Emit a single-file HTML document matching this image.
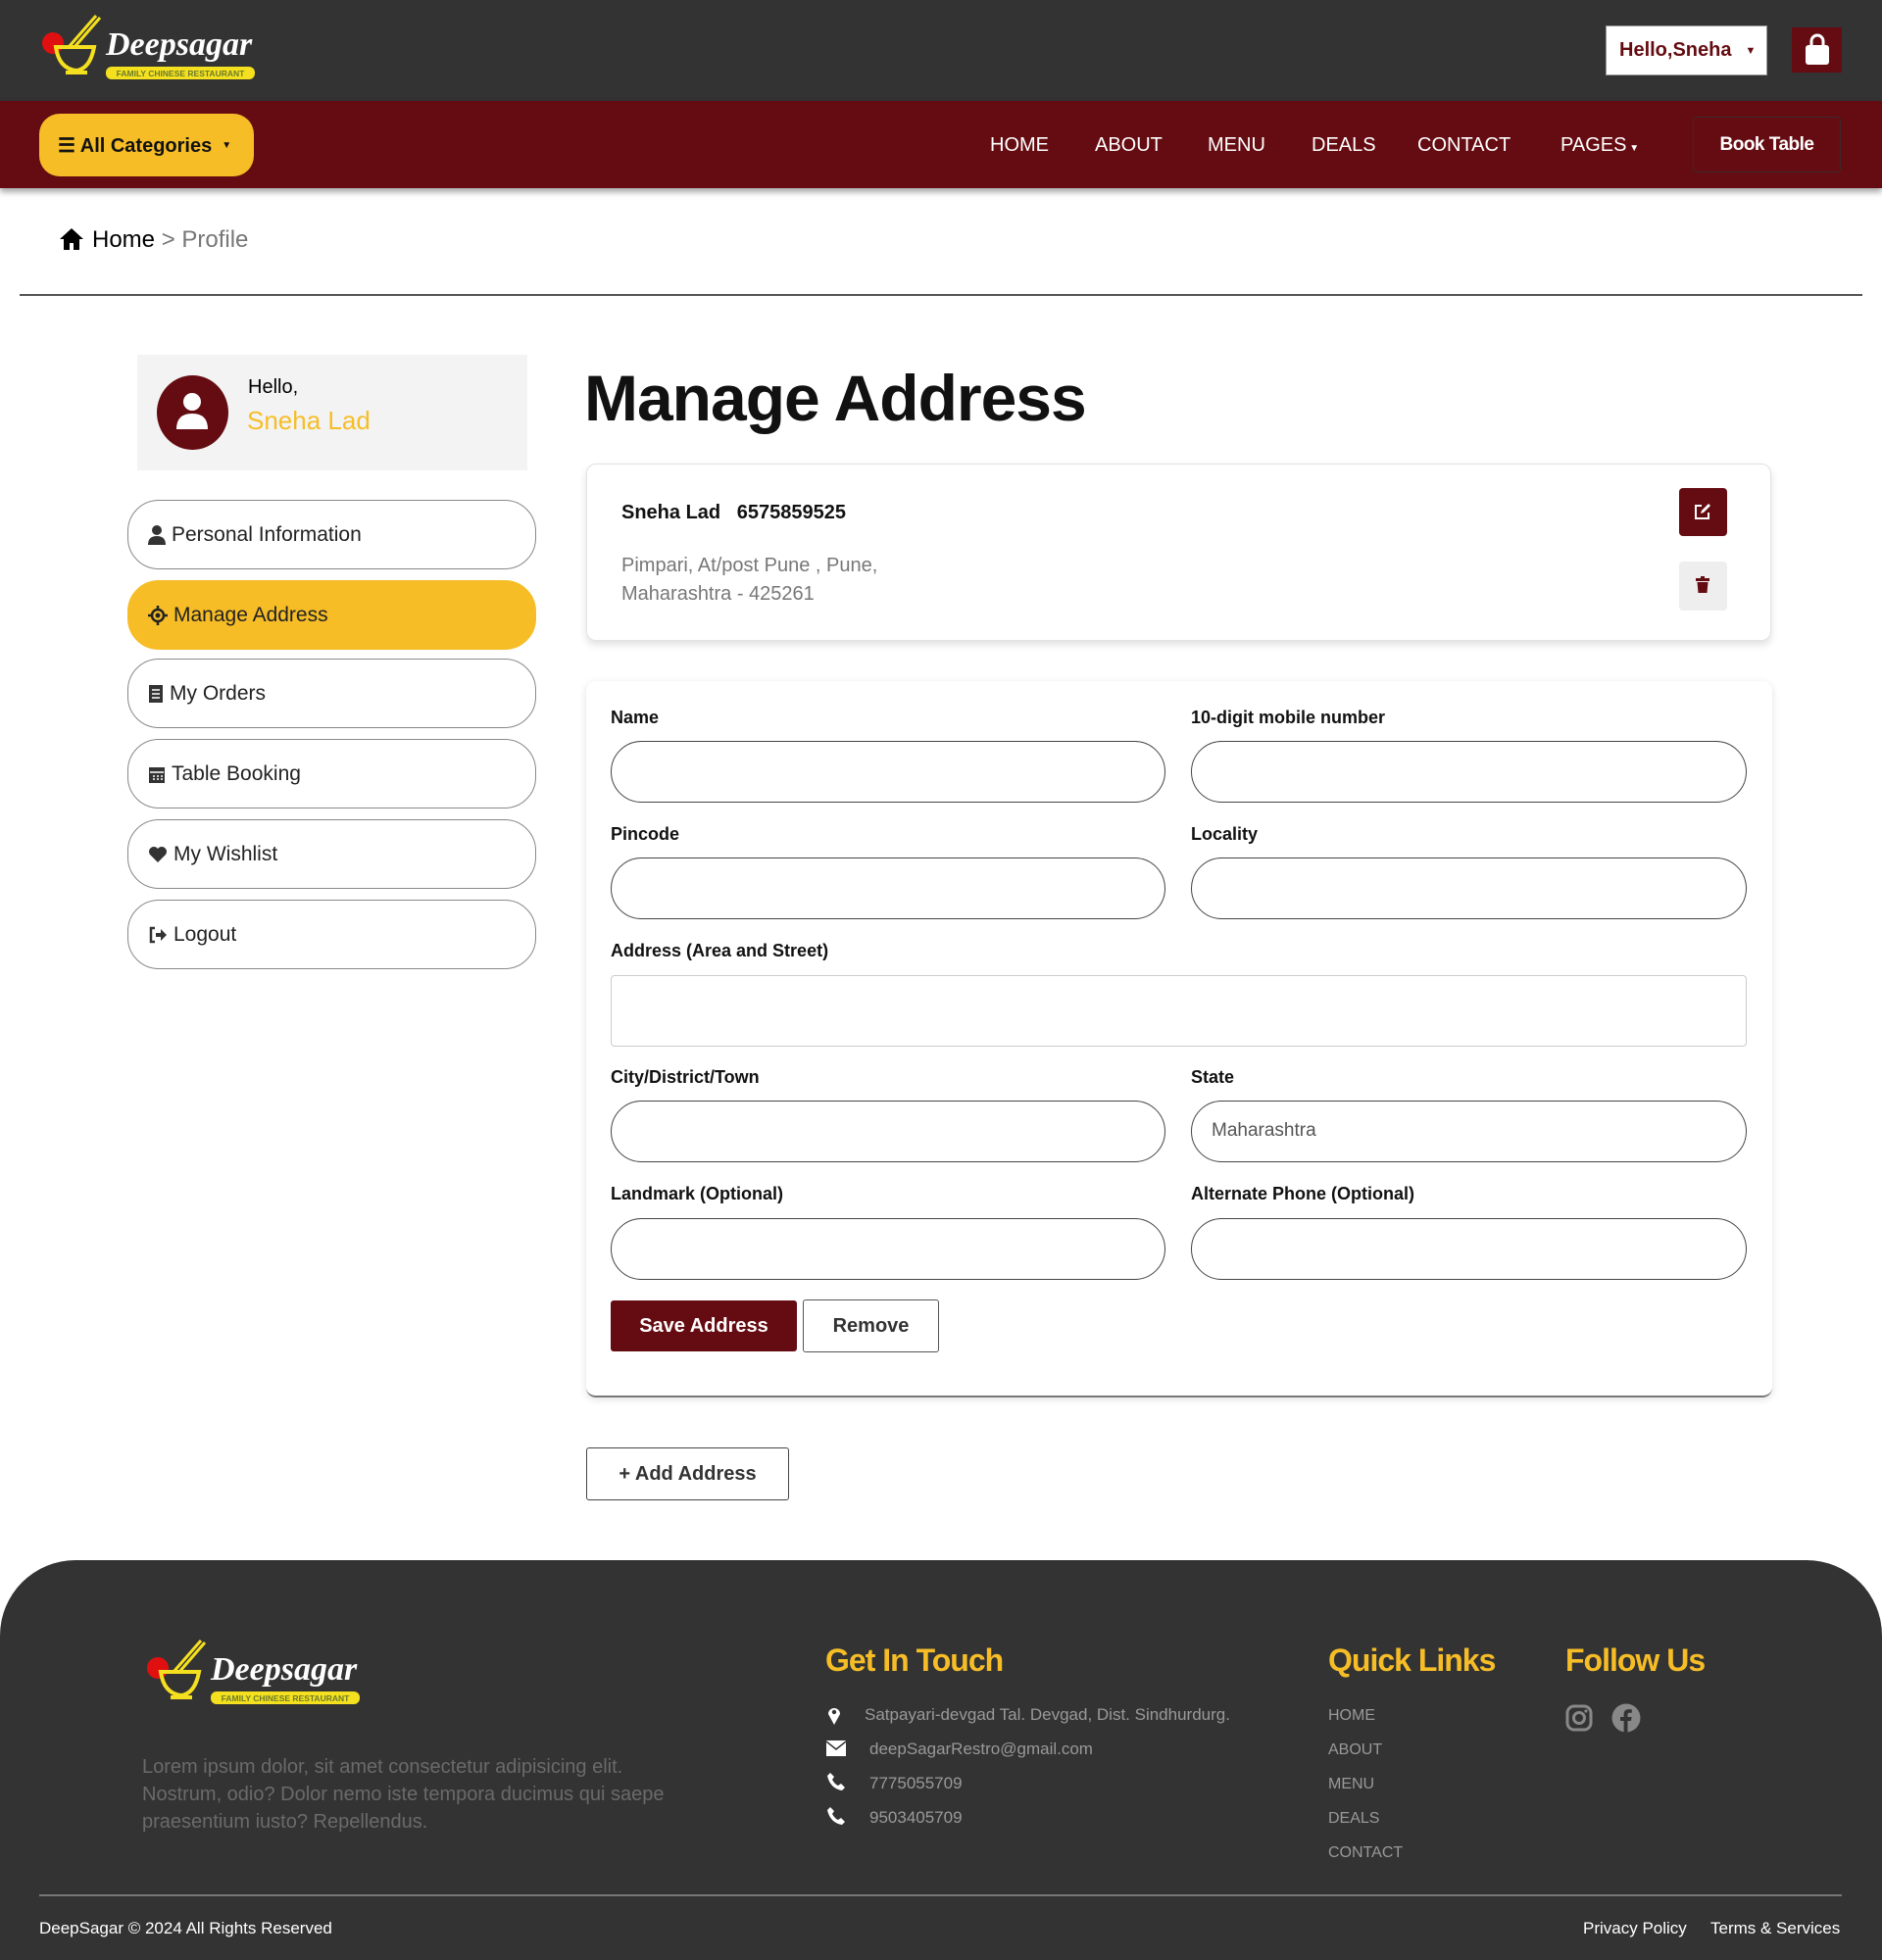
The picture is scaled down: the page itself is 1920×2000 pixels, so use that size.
<!DOCTYPE html>
<html><head><meta charset="utf-8">
<style>
*{box-sizing:border-box;margin:0;padding:0}
body{width:1920px;height:2000px;position:relative;background:#fff;font-family:"Liberation Sans",sans-serif;overflow:hidden}
.a{position:absolute}
.top{left:0;top:0;width:1920px;height:103px;background:#333}
.nav{left:0;top:103px;width:1920px;height:89px;background:#650c12;box-shadow:0 4px 6px rgba(0,0,0,.35)}
.nl{color:#fff;font-size:20px;top:137px}
.menu{left:130px;width:417px;height:71px;border:1px solid #888;border-radius:32px;font-size:21px;color:#222;display:flex;align-items:center;padding-left:20px;gap:6px}
.lbl{font-size:18px;font-weight:bold;color:#111}
.inp{height:63px;border:1.5px solid #444;border-radius:32px;background:#fff}
.ft{color:#f6bd27;font-size:32px;font-weight:bold;top:1676px;letter-spacing:-1px}
.ci{color:#999;font-size:17px}
.ql{left:1355px;color:#999;font-size:16px}
</style></head><body>
<div class="a top"></div>
<div class="a nav"></div>

<!-- logo -->
<svg class="a" style="left:40px;top:14px" width="230" height="72" viewBox="0 0 230 72">
<circle cx="14" cy="30" r="11" fill="#e01010"/>
<path d="M17 34 Q20 56 38 58 Q52 56 56 34 Z" fill="none" stroke="#f5e020" stroke-width="4"/>
<rect x="27" y="58" width="22" height="4" fill="#f5e020"/>
<path d="M30 34 L58 2 M36 34 L62 4" stroke="#f5e020" stroke-width="3"/>
<text x="68" y="42" font-family="Liberation Serif,serif" font-style="italic" font-weight="bold" font-size="34" fill="#fff">Deepsagar</text>
<rect x="68" y="54" width="152" height="13" rx="6" fill="#f5e020"/>
<text x="144" y="64" text-anchor="middle" font-size="8.5" font-weight="bold" fill="#6a7a2a">FAMILY CHINESE RESTAURANT</text>
</svg>

<div class="a" style="left:1638px;top:26px;width:165px;height:51px;background:#fff;border:1px solid #999;color:#650c12;font-weight:bold;font-size:20px;display:flex;align-items:center;padding-left:13px">Hello,Sneha <span style="font-size:11px;margin-left:14px">▼</span></div>
<div class="a" style="left:1828px;top:28px;width:51px;height:46px;background:#650c12"></div>
<svg class="a" style="left:1840px;top:34px" width="28" height="34" viewBox="0 0 28 34"><path d="M8 12 V8 a6 6 0 0 1 12 0 V12" fill="none" stroke="#fff" stroke-width="3"/><rect x="2" y="12" width="24" height="20" rx="3" fill="#fff"/></svg>

<div class="a" style="left:40px;top:116px;width:219px;height:64px;background:#f6bd27;border-radius:21px;font-weight:bold;font-size:20px;display:flex;align-items:center;padding-left:19px;color:#111">☰ All Categories <span style="font-size:10px;margin-left:10px">▼</span></div>
<div class="a nl" style="left:1010px">HOME</div>
<div class="a nl" style="left:1117px">ABOUT</div>
<div class="a nl" style="left:1232px">MENU</div>
<div class="a nl" style="left:1338px">DEALS</div>
<div class="a nl" style="left:1446px">CONTACT</div>
<div class="a nl" style="left:1592px">PAGES<span style="font-size:10px"> ▼</span></div>
<div class="a" style="left:1727px;top:119px;width:151px;height:57px;border:1px solid #3a2a2a;border-radius:4px;color:#fff;font-weight:bold;font-size:19px;display:flex;align-items:center;justify-content:center;letter-spacing:-.5px">Book Table</div>

<!-- breadcrumb -->
<svg class="a" style="left:60px;top:232px" width="26" height="24" viewBox="0 0 26 24"><path d="M13 1 L25 12 H21 V23 H15 V16 H11 V23 H5 V12 H1 Z" fill="#000"/></svg>
<div class="a" style="left:94px;top:231px;font-size:24px;color:#000">Home <span style="color:#777">&gt; Profile</span></div>
<div class="a" style="left:20px;top:300px;width:1880px;height:2px;background:#555"></div>

<!-- profile -->
<div class="a" style="left:140px;top:362px;width:398px;height:118px;background:#f3f3f3"></div>
<div class="a" style="left:160px;top:383px;width:73px;height:76px;border-radius:50%;background:#650c12"></div>
<svg class="a" style="left:178px;top:398px" width="36" height="42" viewBox="0 0 36 42"><circle cx="18" cy="12" r="9" fill="#fff"/><path d="M2 40 Q2 24 18 24 Q34 24 34 40 Z" fill="#fff"/></svg>
<div class="a" style="left:253px;top:384px;font-size:20px;color:#000">Hello,</div>
<div class="a" style="left:252px;top:414px;font-size:26px;color:#f6bd27">Sneha Lad</div>

<div class="a menu" style="top:510px"><svg width="18" height="20" viewBox="0 0 18 20"><circle cx="9" cy="5" r="5" fill="#333"/><path d="M0 20 Q0 11 9 11 Q18 11 18 20Z" fill="#333"/></svg>Personal Information</div>
<div class="a menu" style="top:592px;background:#f6bd27;border-color:#f6bd27"><svg width="20" height="20" viewBox="0 0 20 20"><circle cx="10" cy="10" r="6" fill="none" stroke="#222" stroke-width="2.5"/><circle cx="10" cy="10" r="2.5" fill="#222"/><path d="M10 0V4M10 16V20M0 10H4M16 10H20" stroke="#222" stroke-width="2.5"/></svg>Manage Address</div>
<div class="a menu" style="top:672px"><svg width="16" height="20" viewBox="0 0 16 20"><rect x="1" y="1" width="14" height="18" fill="#333"/><path d="M4 6H12M4 10H12M4 14H12" stroke="#fff" stroke-width="1.5"/></svg>My Orders</div>
<div class="a menu" style="top:754px"><svg width="18" height="20" viewBox="0 0 18 20"><rect x="1" y="3" width="16" height="16" fill="#333"/><path d="M2 8H16M5 12H7M9 12H11M13 12H15M5 15H7M9 15H11M13 15H15" stroke="#fff" stroke-width="1.5"/></svg>Table Booking</div>
<div class="a menu" style="top:836px"><svg width="20" height="18" viewBox="0 0 20 18"><path d="M10 17 L2 9 A5 5 0 0 1 10 3 A5 5 0 0 1 18 9 Z" fill="#333"/></svg>My Wishlist</div>
<div class="a menu" style="top:918px"><svg width="20" height="18" viewBox="0 0 20 18"><path d="M7 2H3V16H7" fill="none" stroke="#333" stroke-width="2.5"/><path d="M8 7H13V3L19 9L13 15V11H8Z" fill="#333"/></svg>Logout</div>

<!-- main -->
<div class="a" style="left:596px;top:368px;font-size:66px;font-weight:bold;color:#111;letter-spacing:-1px">Manage Address</div>

<div class="a" style="left:598px;top:473px;width:1209px;height:181px;border:1px solid #e2e2e2;border-radius:10px;box-shadow:0 4px 8px rgba(0,0,0,.12)"></div>
<div class="a" style="left:634px;top:512px;font-size:20px;font-weight:bold;color:#111">Sneha Lad &nbsp;&nbsp;6575859525</div>
<div class="a" style="left:634px;top:563px;font-size:20px;color:#777;line-height:29px">Pimpari, At/post Pune , Pune,<br>Maharashtra - 425261</div>
<div class="a" style="left:1713px;top:498px;width:49px;height:49px;background:#650c12;border-radius:4px"></div>
<svg class="a" style="left:1728px;top:513px" width="18" height="18" viewBox="0 0 18 18"><path d="M8 3H2V16H15V10" fill="none" stroke="#fff" stroke-width="2"/><path d="M7 11L8 8L15 1L17 3L10 10Z" fill="#fff"/></svg>
<div class="a" style="left:1713px;top:573px;width:49px;height:50px;background:#eee;border-radius:4px"></div>
<svg class="a" style="left:1730px;top:588px" width="14" height="18" viewBox="0 0 14 18"><rect x="0" y="2" width="14" height="3" fill="#650c12"/><rect x="5" y="0" width="4" height="3" fill="#650c12"/><path d="M1.5 6H12.5L11.5 17H2.5Z" fill="#650c12"/></svg>

<div class="a" style="left:598px;top:695px;width:1210px;height:731px;border-radius:10px;box-shadow:0 2px 8px rgba(0,0,0,.12);border-bottom:2px solid #777"></div>
<div class="a lbl" style="left:623px;top:722px">Name</div>
<div class="a lbl" style="left:1215px;top:722px">10-digit mobile number</div>
<div class="a inp" style="left:623px;top:756px;width:566px"></div>
<div class="a inp" style="left:1215px;top:756px;width:567px"></div>
<div class="a lbl" style="left:623px;top:841px">Pincode</div>
<div class="a lbl" style="left:1215px;top:841px">Locality</div>
<div class="a inp" style="left:623px;top:875px;width:566px"></div>
<div class="a inp" style="left:1215px;top:875px;width:567px"></div>
<div class="a lbl" style="left:623px;top:960px">Address (Area and Street)</div>
<div class="a" style="left:623px;top:995px;width:1159px;height:73px;border:1px solid #ccc;border-radius:4px"></div>
<div class="a lbl" style="left:623px;top:1089px">City/District/Town</div>
<div class="a lbl" style="left:1215px;top:1089px">State</div>
<div class="a inp" style="left:623px;top:1123px;width:566px"></div>
<div class="a inp" style="left:1215px;top:1123px;width:567px;font-size:19px;color:#555;padding:19px 0 0 20px">Maharashtra</div>
<div class="a lbl" style="left:623px;top:1208px">Landmark (Optional)</div>
<div class="a lbl" style="left:1215px;top:1208px">Alternate Phone (Optional)</div>
<div class="a inp" style="left:623px;top:1243px;width:566px"></div>
<div class="a inp" style="left:1215px;top:1243px;width:567px"></div>
<div class="a" style="left:623px;top:1327px;width:190px;height:52px;background:#650c12;border-radius:3px;color:#fff;font-weight:bold;font-size:20px;display:flex;align-items:center;justify-content:center">Save Address</div>
<div class="a" style="left:819px;top:1326px;width:139px;height:54px;border:1px solid #555;border-radius:3px;color:#333;font-weight:bold;font-size:20px;display:flex;align-items:center;justify-content:center">Remove</div>
<div class="a" style="left:598px;top:1477px;width:207px;height:54px;border:1.5px solid #444;border-radius:3px;color:#333;font-weight:bold;font-size:20px;display:flex;align-items:center;justify-content:center">+ Add Address</div>

<!-- footer -->
<div class="a" style="left:0;top:1592px;width:1920px;height:408px;background:#333;border-radius:77px 77px 0 0"></div>
<svg class="a" style="left:147px;top:1672px" width="230" height="72" viewBox="0 0 230 72">
<circle cx="14" cy="30" r="11" fill="#e01010"/>
<path d="M17 34 Q20 56 38 58 Q52 56 56 34 Z" fill="none" stroke="#f5e020" stroke-width="4"/>
<rect x="27" y="58" width="22" height="4" fill="#f5e020"/>
<path d="M30 34 L58 2 M36 34 L62 4" stroke="#f5e020" stroke-width="3"/>
<text x="68" y="42" font-family="Liberation Serif,serif" font-style="italic" font-weight="bold" font-size="34" fill="#fff">Deepsagar</text>
<rect x="68" y="54" width="152" height="13" rx="6" fill="#f5e020"/>
<text x="144" y="64" text-anchor="middle" font-size="8.5" font-weight="bold" fill="#6a7a2a">FAMILY CHINESE RESTAURANT</text>
</svg>
<div class="a" style="left:145px;top:1789px;width:560px;font-size:20px;line-height:28px;color:#6a6a6a">Lorem ipsum dolor, sit amet consectetur adipisicing elit. Nostrum, odio? Dolor nemo iste tempora ducimus qui saepe praesentium iusto? Repellendus.</div>

<div class="a ft" style="left:842px">Get In Touch</div>
<div class="a ft" style="left:1355px">Quick Links</div>
<div class="a ft" style="left:1597px">Follow Us</div>

<svg class="a" style="left:844px;top:1740px" width="14" height="20" viewBox="0 0 14 20"><path d="M7 20 L1 9 A6 6 0 1 1 13 9Z" fill="#fff"/><circle cx="7" cy="7" r="2.2" fill="#333"/></svg>
<div class="a ci" style="left:882px;top:1740px">Satpayari-devgad Tal. Devgad, Dist. Sindhurdurg.</div>
<svg class="a" style="left:843px;top:1776px" width="20" height="16" viewBox="0 0 20 16"><rect width="20" height="16" fill="#fff"/><path d="M0 1L10 9L20 1" fill="none" stroke="#333" stroke-width="1.5"/></svg>
<div class="a ci" style="left:887px;top:1775px">deepSagarRestro@gmail.com</div>
<svg class="a" style="left:843px;top:1808px" width="20" height="20" viewBox="0 0 20 20"><path d="M4 1 L8 5 L6 8 Q9 13 12 14 L15 12 L19 16 L16 19 Q4 17 1 4Z" fill="#fff"/></svg>
<div class="a ci" style="left:887px;top:1810px">7775055709</div>
<svg class="a" style="left:843px;top:1843px" width="20" height="20" viewBox="0 0 20 20"><path d="M4 1 L8 5 L6 8 Q9 13 12 14 L15 12 L19 16 L16 19 Q4 17 1 4Z" fill="#fff"/></svg>
<div class="a ci" style="left:887px;top:1845px">9503405709</div>

<div class="a ql" style="top:1742px">HOME</div>
<div class="a ql" style="top:1777px">ABOUT</div>
<div class="a ql" style="top:1812px">MENU</div>
<div class="a ql" style="top:1847px">DEALS</div>
<div class="a ql" style="top:1882px">CONTACT</div>

<svg class="a" style="left:1597px;top:1739px" width="28" height="28" viewBox="0 0 28 28"><rect x="2" y="2" width="24" height="24" rx="7" fill="none" stroke="#888" stroke-width="3"/><circle cx="14" cy="14" r="5.5" fill="none" stroke="#888" stroke-width="3"/><circle cx="21" cy="7" r="1.6" fill="#888"/></svg>
<svg class="a" style="left:1644px;top:1738px" width="30" height="30" viewBox="0 0 30 30"><circle cx="15" cy="15" r="14.5" fill="#888"/><path d="M16.5 30V18H20L20.6 14H16.5V11.5Q16.5 9.8 18.4 9.8H20.8V6.4Q19.2 6.1 17.6 6.1Q12.6 6.1 12.6 11.1V14H9V18H12.6V30Z" fill="#333"/></svg>

<div class="a" style="left:40px;top:1933px;width:1839px;height:2px;background:#777"></div>
<div class="a" style="left:40px;top:1958px;font-size:17px;color:#fff">DeepSagar © 2024 All Rights Reserved</div>
<div class="a" style="left:1615px;top:1958px;font-size:17px;color:#fff">Privacy Policy</div>
<div class="a" style="left:1745px;top:1958px;font-size:17px;color:#fff">Terms &amp; Services</div>
</body></html>
